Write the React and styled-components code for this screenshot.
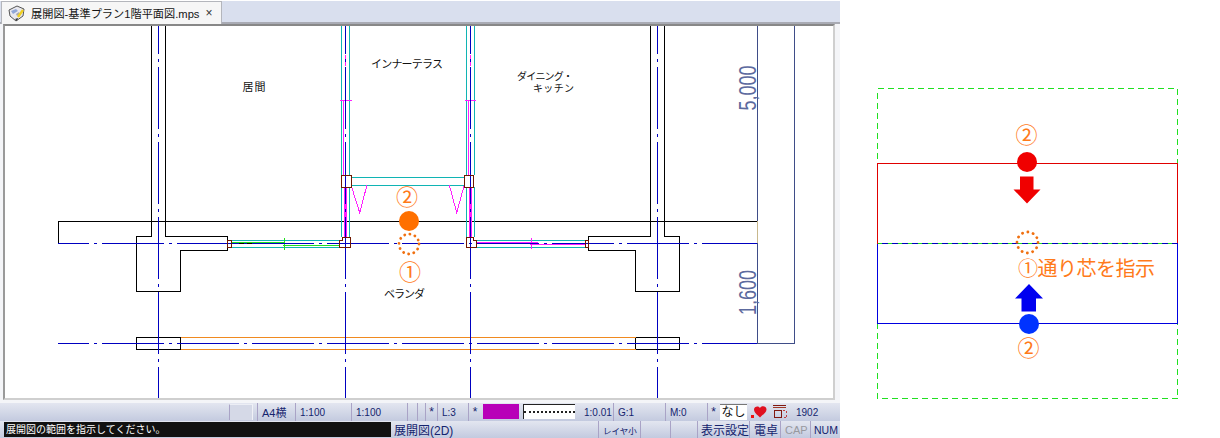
import React from 'react';
import styled, { createGlobalStyle } from 'styled-components';

const GlobalStyle = createGlobalStyle`
  html, body {
    margin: 0;
    padding: 0;
    background: #fff;
    font-family: "Liberation Sans", "Noto Sans CJK JP", sans-serif;
  }
`;

const Page = styled.div`
  display: flex;
  width: 1220px;
  height: 438px;
  overflow: hidden;
`;

const AppWindow = styled.div`
  display: flex;
  flex-direction: column;
  width: 840px;
  height: 438px;
  flex: none;
`;

const TabStrip = styled.div`
  display: flex;
  height: 24px;
  box-sizing: border-box;
  background: #d9dfee;
  border-top: 1px solid #fff;
  border-bottom: 2px solid #a9abb4;
`;

const Tab = styled.div`
  display: flex;
  align-items: center;
  gap: 6px;
  width: 221px;
  height: 23px;
  box-sizing: border-box;
  margin-left: 1px;
  padding-left: 6px;
  background: #f6f6f6;
  border: 1px solid #b4b6bc;
  border-bottom: none;
  font-size: 11.2px;
  color: #151515;
  white-space: nowrap;
  position: relative;
  z-index: 1;

  svg {
    flex: none;
  }
`;

const TabTitle = styled.span`
  flex: 1;
`;

const TabClose = styled.span`
  width: 16px;
  font-size: 12px;
  color: #333;
`;

const Frame = styled.div`
  display: flex;
  height: 379px;
  box-sizing: border-box;
  padding: 0 5px 3px 3px;
  background: #f4f5f8;
`;

const Canvas = styled.div`
  width: 828px;
  height: 372px;
  background: #fff;
  border-style: solid;
  border-width: 2px;
  border-color: #888 #cfcfcf #cfcfcf #9a9a9a;
  overflow: hidden;

  svg {
    display: block;
  }
`;

const StatusRow = styled.div`
  display: flex;
  align-items: stretch;
  height: ${p => p.$h}px;
  background: linear-gradient(#e3e6f0, #c3cadf);
  color: #14246e;
`;

const Cell = styled.div`
  display: flex;
  align-items: center;
  justify-content: ${p => (p.$center ? 'center' : 'flex-start')};
  flex: none;
  width: ${p => p.$w}px;
  box-sizing: border-box;
  padding-left: ${p => (p.$center ? 0 : p.$pad ?? 4)}px;
  border-left: ${p => (p.$plain ? 'none' : '1px solid #a9a3c6')};
  color: ${p => (p.$muted ? '#98999f' : 'inherit')};
  font-size: ${p => p.$size || 10}px;
  white-space: nowrap;
`;

const SunkenCell = styled.div`
  flex: none;
  width: 24px;
  margin: 1px 4px 1px 0;
  box-sizing: border-box;
  border-left: 1px solid #a9a3c6;
  border-top: 1px solid #eceef5;
  border-right: 1px solid #f0f1f7;
  background: #d5d9e7;
`;

const ColorSwatch = styled.div`
  flex: none;
  width: 36px;
  height: 15px;
  margin: 1px 4px 0 2px;
  background: ${p => p.$color};
`;

const LineSample = styled.div`
  flex: none;
  width: 52px;
  height: 15px;
  margin-top: 1px;
  box-sizing: border-box;
  background: #fff;
  border-top: 1px solid #222;
  border-left: 1px solid #222;
  display: flex;
  align-items: center;

  &::after {
    content: "";
    width: 100%;
    border-top: 2px dotted #222;
  }
`;

const NameBox = styled.div`
  flex: none;
  width: 27px;
  height: 15px;
  margin: 1px 4px 0 1px;
  background: #fff;
  border-top: 1px solid #777;
  color: #111;
  font-size: 12px;
  line-height: 14px;
  text-align: center;
`;

const IconCell = styled.div`
  flex: none;
  width: ${p => p.$w}px;
  display: flex;
  align-items: center;
`;

const Message = styled.div`
  flex: none;
  width: 387px;
  margin: 1px 0 1px 4px;
  padding-left: 2px;
  box-sizing: border-box;
  background: #111;
  color: #fff;
  font-size: 10px;
  line-height: 15px;
  white-space: nowrap;
`;

const Diagram = styled.div`
  width: 380px;
  height: 438px;
  flex: none;

  svg {
    display: block;
  }
`;

const PlanLabel = styled.text`
  font-family: "Noto Sans CJK JP", sans-serif;
  font-size: ${p => p.$size || 11}px;
  fill: #111;
`;

const DimLabel = styled.text`
  font-family: "Liberation Sans", sans-serif;
  font-size: 23px;
  fill: #5c6a9e;
`;

const Mark = styled.text`
  font-family: "Noto Sans CJK JP", sans-serif;
  font-size: ${p => p.$size}px;
  fill: #ff7a1a;
  text-anchor: ${p => p.$anchor || 'middle'};
`;

const BLACK = '#000';
const BLUE = '#0000c0';
const TEAL = '#10b4b4';
const BROWN = '#701800';
const MAGENTA = '#ff20ff';
const ORANGE = '#f08a20';
const GREEN = '#20e020';
const DIM = '#3f4d88';

const axisDash = '62 5 3 5';

// page coordinates, the svg viewBox starts at the canvas corner
const planPaths = [
  // outer walls
  [BLACK, 'M58.5 243V221.5H757.5'],
  [BLACK, 'M151.5 26V236.5H136.5V291.5H180.5V250.5H227.5V236.5H165.5V26'],
  [BLACK, 'M650.5 26V236.5H588.5V250.5H635.5V291.5H679.5V236.5H664.5V26'],
  [BLACK, 'M136.5 337.5H180.5V349.5H136.5Z'],
  [BLACK, 'M635.5 337.5H679.5V349.5H635.5Z'],
  [BLACK, 'M231 243H270'],
  [ORANGE, 'M180.5 337.5H635.5M180.5 349.5H635.5'],
  // teal wall faces
  [TEAL, 'M341.5 26V175M349.5 26V175M466.5 26V175M474.5 26V175'],
  [TEAL, 'M341.5 187V237M349.5 187V237M466.5 187V237M474.5 187V237'],
  [TEAL, 'M351 177.5H464M351 185.5H464'],
  [TEAL, 'M231 240.5H340M231 247.5H340M477 240.5H586M477 247.5H586'],
  // openings
  [GREEN, 'M231 242.5H285M283 245.5H339M284.5 237.5V250'],
  [MAGENTA, 'M477 242.5H538M530 244.5H586M531.5 237.5V248.5'],
  [MAGENTA, 'M340 100.5H352M465 100.5H476'],
  [MAGENTA, 'M351 185L359.7 212.7L367 185M449.3 185L456.7 212.7L464.3 185'],
  [MAGENTA, 'M343.5 100V175M468.5 100V175M345.5 55V66M470.5 55V66'],
];

const brownPaths = [
  'M341.5 175.5H351.5V187.5H341.5Z',
  'M464.5 175.5H473.5V187.5H464.5Z',
  'M342.5 237.5H350.5V247.5H339.5V240.5H342.5Z',
  'M466.5 237.5H473.5V240.5H476.5V247.5H466.5Z',
  'M227.5 240.5H231.5V247.5H227.5Z',
  'M585.5 240.5H588.5V247.5H585.5Z',
];

const axisLines = [
  { d: 'M158.5 26V398', offset: 34 },
  { d: 'M345.5 26V398', offset: 34 },
  { d: 'M470.5 26V398', offset: 34 },
  { d: 'M657.5 26V398', offset: 34 },
  { d: 'M58 243.5H757', offset: 31 },
  { d: 'M58 343.5H757', offset: 31 },
];

const FloorPlan = () => (
  <svg width="828" height="372" viewBox="5 26 828 372" fill="none">
    <g shapeRendering="crispEdges">
      {planPaths.map(([color, d]) => (
        <path key={d} d={d} stroke={color} />
      ))}
      <path d="M345.5 187V237M470.5 187V237" stroke="#ff20ff" strokeWidth="3" />
      {axisLines.map(a => (
        <path key={a.d} d={a.d} stroke={BLUE} strokeDasharray={axisDash} strokeDashoffset={a.offset} />
      ))}
      {brownPaths.map(d => (
        <path key={d} d={d} stroke={BROWN} />
      ))}
      <path d="M757.5 26V221M757.5 243V343.5H794.5V26" stroke={DIM} />
      <path d="M757.5 221V243" stroke="#c8b88c" />
    </g>

    <PlanLabel x="242.5" y="91" textLength="23">居間</PlanLabel>
    <PlanLabel x="371" y="68" textLength="72">インナーテラス</PlanLabel>
    <PlanLabel x="517" y="80" textLength="56" $size={10}>ダイニング・</PlanLabel>
    <PlanLabel x="533" y="92" textLength="41" $size={10}>キッチン</PlanLabel>
    <PlanLabel x="384" y="298" textLength="41">ベランダ</PlanLabel>

    <DimLabel transform="translate(756 110.5) rotate(-90)" textLength="45" lengthAdjust="spacingAndGlyphs">5,000</DimLabel>
    <DimLabel transform="translate(756 315) rotate(-90)" textLength="45" lengthAdjust="spacingAndGlyphs">1,600</DimLabel>

    <Mark x="407" y="205" $size={22}>②</Mark>
    <circle cx="409" cy="221" r="10" fill="#ff7000" />
    <circle cx="409" cy="244" r="10" stroke="#f07010" strokeWidth="2.8" strokeLinecap="round" strokeDasharray="0.1 5.2" />
    <Mark x="410" y="280" $size={22}>①</Mark>
  </svg>
);

const GuideDiagram = () => (
  <svg width="380" height="438" viewBox="840 0 380 438" fill="none">
    <g shapeRendering="crispEdges">
      <rect x="877.5" y="88.5" width="300" height="310" stroke="#20e020" strokeDasharray="6 4" />
      <path d="M877.5 243.5V163.5H1177.5V243.5" stroke="#e00000" />
      <path d="M877.5 243.5V323.5H1177.5V243.5" stroke="#0000e0" />
      <path d="M877.5 243.5H1177.5" stroke="#0000c0" />
      <path d="M877.5 243.5H1177.5" stroke="#20e020" strokeDasharray="4 6" />
    </g>

    <Mark x="1026.5" y="143" $size={22}>②</Mark>
    <circle cx="1027" cy="162" r="10" fill="#f00000" />
    <path d="M1020 176.5H1033.5V189.5H1040.5L1027 203.5L1013.5 189.5H1020Z" fill="#f00000" />

    <circle cx="1027.5" cy="242.5" r="10.5" stroke="#f07010" strokeWidth="2.8" strokeLinecap="round" strokeDasharray="0.1 5.4" />
    <Mark x="1018" y="276" $size={20} $anchor="start" textLength="137">①通り芯を指示</Mark>

    <path d="M1029 284L1043 298.5H1036V311.5H1021.5V298.5H1015Z" fill="#0000f0" />
    <circle cx="1029" cy="324" r="10" fill="#0033ff" />
    <Mark x="1028.5" y="356" $size={22}>②</Mark>
  </svg>
);

const TabIcon = () => (
  <svg width="17" height="17" viewBox="0 0 17 17" fill="none">
    <path d="M1 5L9 1L16 4L15 11L8 16L2 11Z" fill="#e8e8ee" stroke="#555" />
    <path d="M3 6L8 4L10 6L5 9Z" fill="#8fa6d8" />
    <path d="M8 9L11 7L12 9L9 11Z" fill="#a8a8b0" />
    <path d="M10 12L15 5" stroke="#f0d020" strokeWidth="2.4" />
    <path d="M7 14L9 16L10 13" fill="#333" />
  </svg>
);

const HeartIcon = () => (
  <svg width="16" height="14" viewBox="0 0 16 14">
    <path d="M9 3C10 0.5 15.5 0.5 15.5 4.5C15.5 7.5 11.5 10 9 12.5C6.5 10 3 7.5 3 4.5C3 1 8 0.5 9 3Z" fill="#e01020" />
    <rect x="0" y="10" width="3" height="3" fill="#f01010" />
  </svg>
);

const SheetIcon = () => (
  <svg width="16" height="14" viewBox="0 0 16 14" fill="none" shapeRendering="crispEdges">
    <path d="M1 0.5H14" stroke="#801810" />
    <path d="M1 2.5H14" stroke="#a03828" />
    <rect x="2.5" y="5.5" width="7" height="7" stroke="#801810" />
    <path d="M10.5 5.5H14.5V12.5H10.5" stroke="#c04040" strokeDasharray="2 2" />
  </svg>
);

const App = () => (
  <Page>
    <GlobalStyle />
    <AppWindow>
      <TabStrip>
        <Tab>
          <TabIcon />
          <TabTitle>展開図-基準プラン1階平面図.mps</TabTitle>
          <TabClose>×</TabClose>
        </Tab>
      </TabStrip>
      <Frame>
        <Canvas>
          <FloorPlan />
        </Canvas>
      </Frame>
      <StatusRow $h={18}>
        <Cell $w={229} $plain />
        <SunkenCell />
        <Cell $w={38} $size={11}>A4横</Cell>
        <Cell $w={56}>1:100</Cell>
        <Cell $w={56}>1:100</Cell>
        <Cell $w={10} />
        <Cell $w={8} />
        <Cell $w={12} $center $size={12}>*</Cell>
        <Cell $w={31}>L:3</Cell>
        <Cell $w={13} $center $size={12}>*</Cell>
        <ColorSwatch $color="#b800b8" />
        <LineSample />
        <Cell $w={38} $plain $pad={9}>1:0.01</Cell>
        <Cell $w={52}>G:1</Cell>
        <Cell $w={42}>M:0</Cell>
        <Cell $w={12} $center $size={12}>*</Cell>
        <NameBox>なし</NameBox>
        <IconCell $w={21}><HeartIcon /></IconCell>
        <IconCell $w={20}><SheetIcon /></IconCell>
        <Cell $w={30} $plain>1902</Cell>
      </StatusRow>
      <StatusRow $h={17}>
        <Message>展開図の範囲を指示してください。</Message>
        <Cell $w={207} $size={12} $plain $pad={3}>展開図(2D)</Cell>
        <Cell $w={42} $size={8.5}>レイヤ小</Cell>
        <Cell $w={30} />
        <Cell $w={27} />
        <Cell $w={52} $size={12} $pad={3}>表示設定</Cell>
        <Cell $w={31} $size={12}>電卓</Cell>
        <Cell $w={30} $size={11} $muted>CAP</Cell>
        <Cell $w={30} $size={10.5} $pad={3}>NUM</Cell>
      </StatusRow>
    </AppWindow>
    <Diagram>
      <GuideDiagram />
    </Diagram>
  </Page>
);

export default App;
